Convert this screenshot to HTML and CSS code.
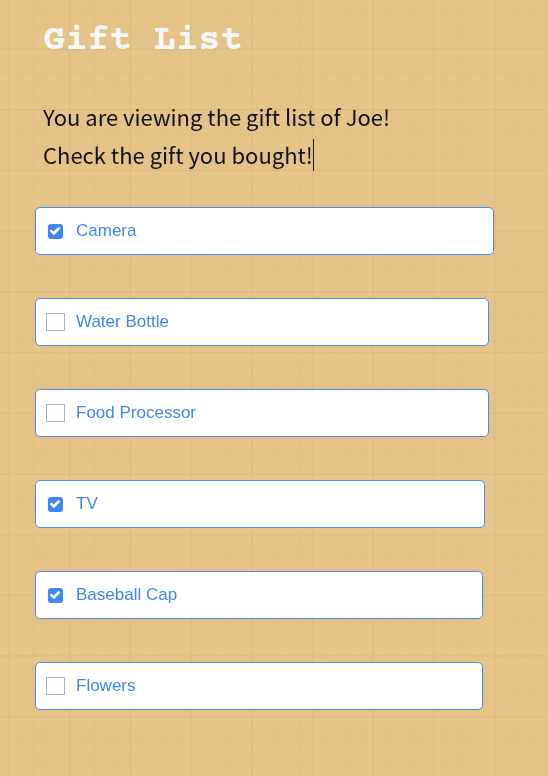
FILE: index.html
```html
<!DOCTYPE html>
<html lang="en">
<head>
<meta charset="utf-8">
<meta name="viewport" content="width=device-width, initial-scale=1">
<title>Gift List</title>
<link rel="stylesheet" href="styles.css">
</head>
<body>
<svg class="paper" aria-hidden="true">
  <defs>
    <pattern id="fine" x="8.4" y="48.4" width="12.14" height="12.14" patternUnits="userSpaceOnUse">
      <path d="M0 0h12.14v1.4H1.4v10.74H0z" fill="#d9b87b" fill-opacity=".2"/>
    </pattern>
    <pattern id="coarse" x="8.2" y="48.2" width="60.7" height="60.7" patternUnits="userSpaceOnUse">
      <path d="M0 0h60.7v1.4H1.4v59.3H0z" fill="#d3b176" fill-opacity=".4"/>
    </pattern>
  </defs>
  <rect width="100%" height="100%" fill="url(#fine)"/>
  <rect width="100%" height="100%" fill="url(#coarse)"/>
</svg>
<main class="page">
  <h1 class="title">Gift List</h1>
  <p class="intro">You are viewing the gift list of Joe!<br>Check the gift you bought!<span class="caret"></span></p>
  <ul class="gifts">
    <li class="gift"><label class="gift-label"><input class="check" type="checkbox" checked><span>Camera</span></label></li>
    <li class="gift gift-medium"><label class="gift-label"><input class="check" type="checkbox"><span>Water Bottle</span></label></li>
    <li class="gift gift-medium"><label class="gift-label"><input class="check" type="checkbox"><span>Food Processor</span></label></li>
    <li class="gift gift-short"><label class="gift-label"><input class="check" type="checkbox" checked><span>TV</span></label></li>
    <li class="gift gift-shorter"><label class="gift-label"><input class="check" type="checkbox" checked><span>Baseball Cap</span></label></li>
    <li class="gift gift-shorter"><label class="gift-label"><input class="check" type="checkbox"><span>Flowers</span></label></li>
  </ul>
</main>
</body>
</html>
```
FILE: styles.css
```css
* {
  box-sizing: border-box;
}

body {
  margin: 0;
  background: #e4c489;
}

.paper {
  position: fixed;
  inset: 0;
  z-index: -1;
  width: 100%;
  height: 100%;
}

.page {
  padding: 19px 54px 48px 35px;
}

.title {
  margin: 0 8px;
  color: #f7f7fa;
  font: bold 37px/44px "Courier Prime", "Liberation Mono", monospace;
}

.intro {
  margin: 34px 0 34px 8px;
  color: #111;
  font: 22px/38px "Source Sans Pro", "Noto Sans CJK JP", sans-serif;
}

.caret {
  display: inline-block;
  width: 1px;
  height: 32px;
  background: #111;
  vertical-align: -7px;
}

.gifts {
  display: grid;
  gap: 43px;
  margin: 0;
  padding: 0;
  list-style: none;
}

.gift {
  border: 1px solid #4a8bea;
  border-radius: 5px;
  background: #fff;
}

.gift-medium {
  margin-right: 5px;
}

.gift-short {
  margin-right: 9px;
}

.gift-shorter {
  margin-right: 11px;
}

.gift-label {
  display: grid;
  grid-template-columns: 20px 1fr;
  align-items: center;
  column-gap: 11px;
  min-height: 46px;
  padding: 0 9px;
  color: #4286f0;
  font: 17px/20px "Liberation Sans", Arial, sans-serif;
}

.check {
  display: grid;
  place-items: center;
  justify-self: center;
  appearance: none;
  width: 19px;
  height: 18px;
  margin: 0;
  border: 1px solid #aab0de;
  background: #fff;
}

.check:checked {
  width: 15px;
  height: 15px;
  border: 0;
  border-radius: 3px;
  background: #4187f3;
}

.check:checked::before {
  content: "";
  width: 11px;
  height: 9px;
  background: #fff;
  clip-path: polygon(0 50%, 16% 32%, 38% 56%, 82% 4%, 100% 22%, 40% 96%);
}
```
